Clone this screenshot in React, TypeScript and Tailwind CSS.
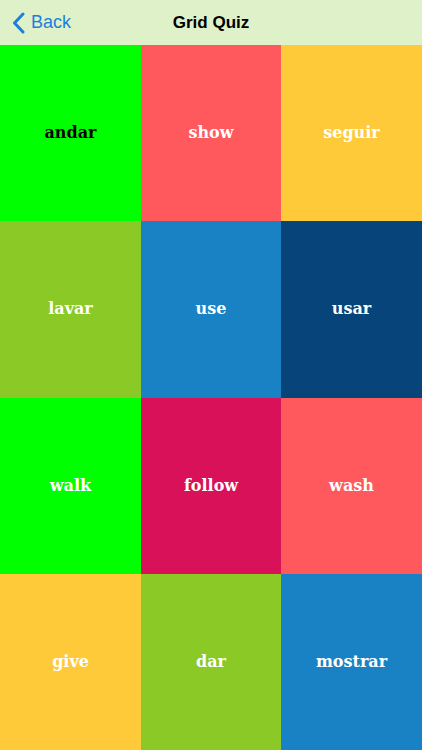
const cells: { word: string; bg: string; text: string }[] = [
  { word: "andar", bg: "bg-[#00ff00]", text: "text-black" },
  { word: "show", bg: "bg-[#ff595e]", text: "text-white" },
  { word: "seguir", bg: "bg-[#ffca3a]", text: "text-white" },
  { word: "lavar", bg: "bg-[#8ac926]", text: "text-white" },
  { word: "use", bg: "bg-[#1982c4]", text: "text-white" },
  { word: "usar", bg: "bg-[#06447a]", text: "text-white" },
  { word: "walk", bg: "bg-[#00ff00]", text: "text-white" },
  { word: "follow", bg: "bg-[#d81159]", text: "text-white" },
  { word: "wash", bg: "bg-[#ff595e]", text: "text-white" },
  { word: "give", bg: "bg-[#ffca3a]", text: "text-white" },
  { word: "dar", bg: "bg-[#8ac926]", text: "text-white" },
  { word: "mostrar", bg: "bg-[#1982c4]", text: "text-white" },
];

export default function App() {
  return (
    <div className="flex h-[750px] w-[422px] flex-col overflow-hidden bg-white">
      <header className="relative flex h-[45px] shrink-0 items-center justify-center bg-[#dff1c8] font-['Liberation_Sans',sans-serif]">
        <button type="button" className="absolute left-[12px] top-0 flex h-full items-center gap-[6px] text-[#1c7fe0]">
          <svg width="13" height="22" viewBox="0 0 13 22" fill="none">
            <path d="M11 2 L2.5 11 L11 20" stroke="currentColor" strokeWidth="3" strokeLinecap="round" strokeLinejoin="round" />
          </svg>
          <span className="text-[18px]">Back</span>
        </button>
        <h1 className="text-[17px] font-bold text-black">Grid Quiz</h1>
      </header>
      <main className="grid flex-1 grid-cols-[141px_140px_141px] grid-rows-4">
        {cells.map((c) => (
          <div key={c.word} className={`flex items-center justify-center ${c.bg}`}>
            <span className={`font-['DejaVu_Serif',serif] text-[16px] font-bold ${c.text}`}>{c.word}</span>
          </div>
        ))}
      </main>
    </div>
  );
}
